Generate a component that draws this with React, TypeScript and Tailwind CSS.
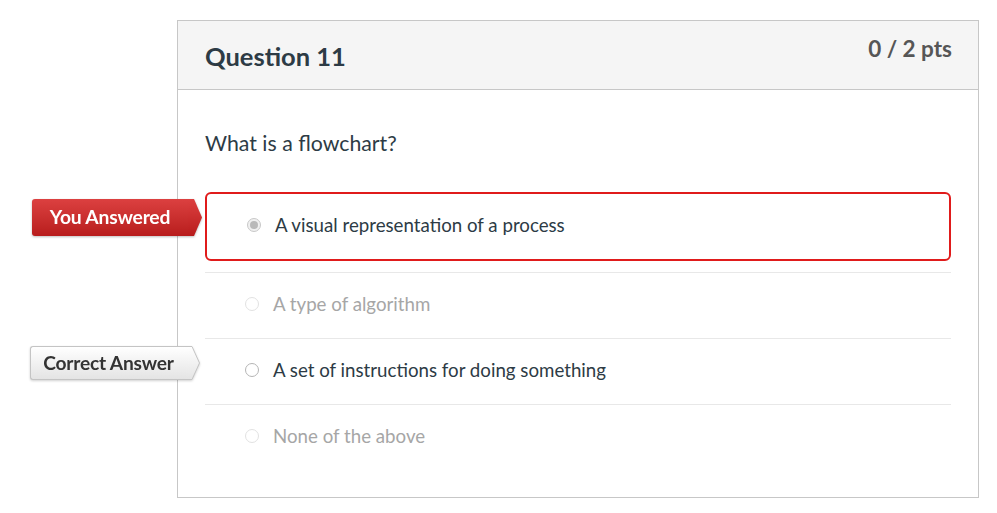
import React from 'react';

type Answer = {
  text: string;
  muted: boolean;
  picked?: boolean;
  tag?: 'you' | 'correct';
};

const answers: Answer[] = [
  { text: 'A visual representation of a process', muted: false, picked: true, tag: 'you' },
  { text: 'A type of algorithm', muted: true },
  { text: 'A set of instructions for doing something', muted: false, tag: 'correct' },
  { text: 'None of the above', muted: true },
];

function Radio({ picked, muted }: { picked?: boolean; muted: boolean }) {
  return (
    <span
      className={
        'flex h-[14px] w-[14px] shrink-0 items-center justify-center rounded-full border ' +
        (picked
          ? 'border-[#c8c8c8] bg-[#f0f0f0]'
          : muted
          ? 'border-[#e2e2e2] bg-white'
          : 'border-[#b5b5b5] bg-white')
      }
    >
      {picked && <span className="h-[8px] w-[8px] rounded-full bg-[#b9b9b9]" />}
    </span>
  );
}

function YouAnsweredTag() {
  return (
    <div className="absolute left-[-175px] top-[5px] flex h-[37px] items-stretch drop-shadow-[0_1px_1px_rgba(0,0,0,0.25)]">
      <div className="flex w-[156px] items-center justify-center rounded-l-[3px] bg-gradient-to-b from-[#dc4040] to-[#b81c1c] text-[19.3px] font-bold tracking-[-0.2px] text-white">
        You Answered
      </div>
      <svg width="14" height="37" viewBox="0 0 14 37" className="block">
        <defs>
          <linearGradient id="ya" x1="0" y1="0" x2="0" y2="1">
            <stop offset="0" stopColor="#dc4040" />
            <stop offset="1" stopColor="#b81c1c" />
          </linearGradient>
        </defs>
        <path d="M0 0 L6 0 L14 18.5 L6 37 L0 37 Z" fill="url(#ya)" />
      </svg>
    </div>
  );
}

function CorrectTag() {
  return (
    <div className="absolute left-[-175px] top-[7px] flex h-[34px] items-stretch drop-shadow-[0_1px_1px_rgba(0,0,0,0.18)]">
      <div className="flex w-[156px] items-center justify-center rounded-l-[3px] border border-r-0 border-[#c4c4c4] bg-gradient-to-b from-[#ffffff] to-[#e4e4e4] text-[19.2px] font-bold tracking-[-0.2px] text-[#333]">
        Correct Answer
      </div>
      <svg width="14" height="34" viewBox="0 0 14 34" className="block">
        <defs>
          <linearGradient id="ca" x1="0" y1="0" x2="0" y2="1">
            <stop offset="0" stopColor="#ffffff" />
            <stop offset="1" stopColor="#e4e4e4" />
          </linearGradient>
        </defs>
        <path d="M0 0.5 L6 0.5 L13.5 17 L6 33.5 L0 33.5" fill="url(#ca)" stroke="#c4c4c4" strokeWidth="1" />
      </svg>
    </div>
  );
}

export default function App() {
  return (
    <div className="min-h-screen bg-white pl-[177px] pt-[20px] font-['Lato',sans-serif]">
      <div className="w-[802px] border border-[#c7c7c7] bg-white">
        <div className="flex h-[69px] items-start justify-between border-b border-[#c7c7c7] bg-[#f5f5f5] pl-[27px] pr-[26px]">
          <h2 className="pt-[18px] text-[25.5px] font-bold leading-[34px] text-[#2d3b45]">Question 11</h2>
          <div className="pt-[14px] text-[22.5px] font-bold leading-[28px] text-[#565656]">0 / 2 pts</div>
        </div>

        <div className="px-[27px] pb-[27px] pt-[39px]">
          <p className="text-[21.3px] leading-[28px] text-[#2d3b45]">What is a flowchart?</p>

          <div className="mt-[35px]">
            {answers.map((a, i) =>
              a.picked ? (
                <div
                  key={i}
                  className="relative mb-[11px] flex h-[69px] items-center gap-[14px] rounded-[6px] border-2 border-[#e01b1b] pb-[3px] pl-[40px]"
                >
                  {a.tag === 'you' && <YouAnsweredTag />}
                  <Radio picked muted={a.muted} />
                  <span className="text-[18.7px] text-[#2d3b45]">{a.text}</span>
                </div>
              ) : (
                <div
                  key={i}
                  className="relative flex h-[66px] items-center gap-[14px] border-t border-[#e8e8e8] pb-[3px] pl-[40px]"
                >
                  {a.tag === 'correct' && <CorrectTag />}
                  <Radio muted={a.muted} />
                  <span className={'text-[18.7px] ' + (a.muted ? 'text-[#a6a6a6]' : 'text-[#2d3b45]')}>
                    {a.text}
                  </span>
                </div>
              )
            )}
          </div>
        </div>
      </div>
    </div>
  );
}
